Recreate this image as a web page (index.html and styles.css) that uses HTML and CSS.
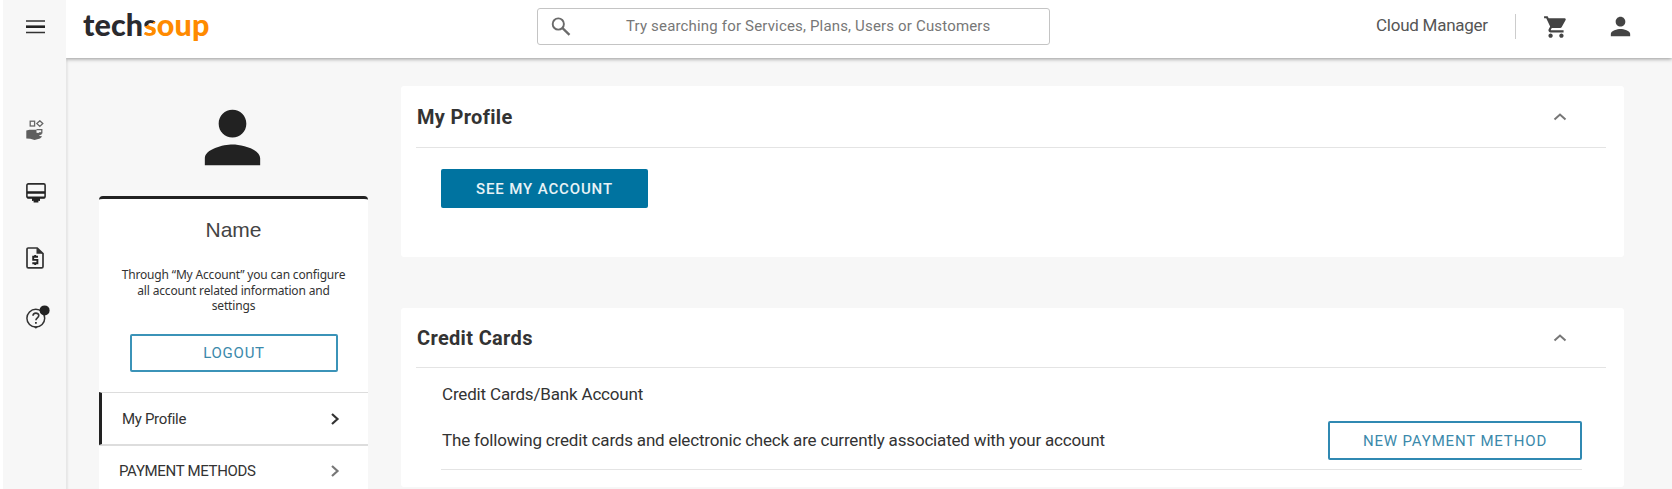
FILE: index.html
```html
<!DOCTYPE html>
<html lang="en">
<head>
  <meta charset="UTF-8" />
  <meta name="viewport" content="width=device-width, initial-scale=1.0"/>
  <title>TechSoup - My Account</title>
  <link rel="stylesheet" href="styles.css">
</head>
<body>
  <nav class="rail">
    <a class="rail-menu" href="#">
      <svg width="19" height="14" viewBox="0 0 19 14"><path d="M0 1h19M0 12.6h19" stroke="#333" stroke-width="1.5"/><path d="M0 6.7h19" stroke="#222" stroke-width="2.6"/></svg>
    </a>
    <a class="rail-services" href="#">
      <svg width="18" height="21" viewBox="0 0 18 21">
        <g fill="none" stroke="#666" stroke-width="1.3">
          <rect x="4.2" y="1.2" width="4.4" height="4.8"/>
          <path d="M13.8.8l3 2.8-3 2.8-3-2.8zM10.5 9.6h5.3v3.2h-3"/>
        </g>
        <path d="M.3 10.5l3.2-.8h7v3l2.3.3 3-.6v1.8l-3 1.6 3.400.6-2.200 2-5.500 1.700-4.200-1.300-4-.4z" fill="#5e5e5e"/>
      </svg>
    </a>
    <a class="rail-screen" href="#">
      <svg width="20" height="20" viewBox="0 0 20 20">
        <rect x=".9" y=".9" width="18.2" height="14" rx="1.4" fill="#f7f7f7" stroke="#2b2b2b" stroke-width="1.6"/>
        <path d="M1 8.2h18v2.6H1zM1 13.400h18v1.800H1zM6 15h8v3l-1.6-.2v1.7H7.6v-1.7L6 18z" fill="#222"/>
      </svg>
    </a>
    <a class="rail-invoice" href="#">
      <svg width="18" height="22" viewBox="0 0 18 22">
        <path d="M2.2 1h9l5.8 5.6v12.8c0 .8-.5 1.4-1.4 1.4H2.4c-.9 0-1.4-.6-1.4-1.4V2.3C1 1.5 1.5 1 2.2 1z" fill="none" stroke="#333" stroke-width="1.7"/>
        <path d="M10.5 1v5.8H17z" fill="#333"/>
        <path d="M12 9.7H7.2v3.2h4.2v3.4H6.3M9.2 8v1.8M9.2 16.2V18" fill="none" stroke="#222" stroke-width="1.9"/>
      </svg>
    </a>
    <a class="rail-help" href="#">
      <svg width="24" height="24" viewBox="0 0 24 24">
        <circle cx="9.8" cy="13.2" r="8.9" fill="none" stroke="#333" stroke-width="1.5"/>
        <path d="M7 10.8c0-3.7 5.8-3.5 5.8-.2 0 2.2-2.9 2.4-2.9 4.7" fill="none" stroke="#333" stroke-width="1.6"/>
        <path d="M9 17h1.8v1.8H9zM7.5 21.5l2.4 2.3 2.4-2.3z" fill="#333"/>
        <circle cx="18.6" cy="5.4" r="5" fill="#222"/>
      </svg>
    </a>
  </nav>

  <div class="page">
    <header class="topbar">
      <div class="logo">tech<span class="logo-s">s</span><span class="logo-soup">oup</span></div>
      <div class="search">
        <svg width="20" height="19" viewBox="0 0 20 19" fill="none" stroke="#6a6a6a"><circle cx="7.3" cy="7" r="5.6" stroke-width="1.9"/><path d="M11.5 11.2l7 6.6" stroke-width="2.3"/></svg>
        <span class="search-text">Try searching for Services, Plans, Users or Customers</span>
      </div>
      <div class="user-tools">
        <span class="role">Cloud Manager</span>
        <svg class="cart" width="26" height="26" viewBox="0 0 24 24" fill="#444"><path d="M7 18c-1.100 0-1.990.9-1.990 2S5.900 22 7 22s2-.9 2-2-.9-2-2-2zM1 2v2h2l3.600 7.590-1.350 2.450c-.16.280-.25.610-.25.960 0 1.100.9 2 2 2h12v-2H7.420c-.14 0-.25-.11-.25-.25l.03-.12.9-1.630h7.450c.75 0 1.410-.41 1.750-1.030l3.580-6.490A1 1 0 0 0 20 4H5.210l-.94-2H1zm16 16c-1.100 0-1.990.9-1.990 2s.89 2 1.990 2 2-.9 2-2-.9-2-2-2z"/></svg>
        <svg class="user" width="29" height="29" viewBox="0 0 24 24" fill="#444"><path d="M12 12c2.210 0 4-1.790 4-4s-1.790-4-4-4-4 1.790-4 4 1.790 4 4 4zm0 2c-2.670 0-8 1.340-8 4v2h16v-2c0-2.660-5.330-4-8-4z"/></svg>
      </div>
    </header>

    <div class="content">
      <aside class="account">
        <svg class="avatar" width="83" height="83" viewBox="0 0 24 24" fill="#222"><path d="M12 12c2.210 0 4-1.790 4-4s-1.790-4-4-4-4 1.790-4 4 1.790 4 4 4zm0 2c-2.670 0-8 1.340-8 4v2h16v-2c0-2.660-5.330-4-8-4z"/></svg>
        <div class="account-card">
          <div class="account-name">Name</div>
          <p class="account-text">Through “My Account” you can configure<br>all account related information and<br>settings</p>
          <button class="btn btn-logout">LOGOUT</button>
          <a class="account-link active" href="#"><span>My Profile</span>
            <svg width="10" height="14" viewBox="0 0 10 14"><path d="M2 2l5.500 5L2 12" fill="none" stroke="#333" stroke-width="2.200"/></svg>
          </a>
          <a class="account-link payment" href="#"><span>PAYMENT METHODS</span>
            <svg width="10" height="14" viewBox="0 0 10 14"><path d="M2 2l5.500 5L2 12" fill="none" stroke="#777" stroke-width="2.200"/></svg>
          </a>
        </div>
      </aside>

      <main class="panels">
        <section class="panel">
          <div class="panel-head">
            <h2>My Profile</h2>
            <svg width="14" height="9" viewBox="0 0 14 9"><path d="M1.500 7.500L7 2.500l5.500 5" fill="none" stroke="#777" stroke-width="2"/></svg>
          </div>
          <div class="panel-body profile-body">
            <button class="btn btn-primary">SEE MY ACCOUNT</button>
          </div>
        </section>

        <section class="panel panel-cards">
          <div class="panel-head">
            <h2>Credit Cards</h2>
            <svg width="14" height="9" viewBox="0 0 14 9"><path d="M1.500 7.500L7 2.500l5.500 5" fill="none" stroke="#777" stroke-width="2"/></svg>
          </div>
          <div class="panel-body">
            <div class="cards-label">Credit Cards/Bank Account</div>
            <div class="cards-row">
              <span class="cards-text">The following credit cards and electronic check are currently associated with your account</span>
              <button class="btn btn-payment">NEW PAYMENT METHOD</button>
            </div>
          </div>
        </section>
      </main>
    </div>
  </div>
</body>
</html>
```
FILE: styles.css
```css
* {
  box-sizing: border-box;
}

body {
  margin: 0;
  height: 489px;
  display: flex;
  background-color: #fff;
  font-family: Roboto, sans-serif;
  color: #333;
}

a {
  color: inherit;
  text-decoration: none;
}

svg {
  display: block;
  flex-shrink: 0;
}

.rail {
  width: 63px;
  margin-left: 3px;
  padding: 20px 0 0 22.5px;
  background-color: #f7f7f7;
}

.rail-services {
  display: block;
  margin-top: 86px;
}

.rail-screen {
  display: block;
  margin-top: 42px;
}

.rail-invoice {
  display: block;
  margin-top: 44px;
}

.rail-help {
  display: block;
  margin-top: 36px;
}

.page {
  flex: 1;
  min-width: 0;
}

.topbar {
  position: relative;
  height: 58px;
  padding: 8px 37px 0 17px;
  display: flex;
  align-items: flex-start;
  background-color: #fff;
  box-shadow: 0 1px 4px rgba(0, 0, 0, 0.4);
  clip-path: inset(0 0 -8px 0);
}

.logo {
  width: 454px;
  font-family: Lato, sans-serif;
  font-size: 30.5px;
  font-weight: 900;
  line-height: 32px;
  letter-spacing: 0.1px;
  color: #2a2a2e;
}

.logo-s {
  color: transparent;
  background: linear-gradient(155deg, #2a2a2e 50%, #ff8a00 50%);
  -webkit-background-clip: text;
  background-clip: text;
}

.logo-soup {
  color: #ff8a00;
}

.search {
  width: 513px;
  height: 37px;
  padding: 8px 13px 0;
  display: flex;
  border: 1px solid #c4c4c4;
  border-radius: 3px;
}

.search-text {
  margin-left: 55px;
  font-size: 15px;
  line-height: 19px;
  letter-spacing: 0.17px;
  color: #777;
  white-space: nowrap;
}

.user-tools {
  margin-left: auto;
  display: flex;
  align-items: flex-start;
}

.role {
  width: 140px;
  height: 25px;
  margin-top: 6px;
  font-size: 17px;
  line-height: 22px;
  letter-spacing: -0.25px;
  color: #555;
  border-right: 1px solid #ccc;
  white-space: nowrap;
}

.cart {
  margin: 6px 0 0 27px;
}

.user {
  margin: 4px 0 0 37px;
}

.content {
  height: 431px;
  display: flex;
  align-items: flex-start;
  padding: 28px 48px 0 33px;
  background-color: #f7f7f7;
  box-shadow: inset 3px 0 2px -1px #e6e6e6;
}

.account {
  width: 269px;
  margin: 10px 33px 0 0;
}

.avatar {
  margin: 0 auto 0 92px;
}

.account-card {
  margin-top: 17px;
  height: 293px;
  background-color: #fff;
  border-top: 3px solid #222;
  border-radius: 4px 4px 0 0;
}

.account-name {
  padding-top: 19px;
  font-family: "Liberation Sans", sans-serif;
  font-size: 21px;
  line-height: 24px;
  text-align: center;
  color: #444;
}

.account-text {
  margin: 25px 0 0;
  font-family: "Noto Sans", sans-serif;
  font-size: 12px;
  line-height: 15.7px;
  letter-spacing: -0.17px;
  text-align: center;
  color: #333;
}

.btn {
  display: block;
  padding: 0;
  font-family: Roboto, sans-serif;
  font-size: 15px;
  border-radius: 2px;
  white-space: nowrap;
}

.btn-logout {
  width: 208px;
  height: 38px;
  margin: 20px 0 20px 31px;
  background-color: #fff;
  border: 2px solid #3b93b8;
  color: #3b89ab;
  letter-spacing: 0.75px;
}

.account-link {
  height: 53px;
  padding: 0 28px 0 20px;
  display: flex;
  align-items: center;
  justify-content: space-between;
  border-top: 1px solid #ddd;
  font-size: 15px;
  letter-spacing: -0.33px;
}

.account-link.active {
  border-left: 3px solid #222;
  border-bottom: 1px solid #ddd;
}

.account-link.payment {
  height: 43px;
  padding-top: 8px;
}

.panels {
  flex: 1;
}

.panel {
  height: 171px;
  padding: 0 18px 0 15px;
  background-color: #fff;
  border-radius: 3px;
}

.panel-cards {
  height: 179px;
  margin-top: 51px;
}

.panel-head {
  height: 62px;
  padding: 0 39px 0 1px;
  display: flex;
  align-items: center;
  justify-content: space-between;
  border-bottom: 1px solid #e4e4e4;
}

.panel-cards .panel-head {
  height: 60px;
}

.panel-head h2 {
  margin: 0;
  font-size: 20px;
  font-weight: 700;
  letter-spacing: 0.33px;
}

.panel-body {
  padding: 0 24px 0 25px;
}

.profile-body {
  padding-top: 21px;
}

.btn-primary {
  width: 207px;
  height: 39px;
  background-color: #0073a0;
  border: 0;
  color: #e8f2f6;
  font-weight: 500;
  letter-spacing: 0.87px;
}

.cards-label {
  padding: 16px 0 0 1px;
  font-size: 17px;
  line-height: 20px;
  letter-spacing: -0.17px;
}

.cards-row {
  height: 66px;
  padding-top: 17px;
  display: flex;
  justify-content: space-between;
  border-bottom: 1px solid #e4e4e4;
}

.cards-text {
  padding: 9px 0 0 1px;
  font-size: 17px;
  line-height: 20px;
  letter-spacing: -0.18px;
  white-space: nowrap;
}

.btn-payment {
  width: 254px;
  height: 39px;
  background-color: #fff;
  border: 2px solid #3089b2;
  color: #3b89ab;
  letter-spacing: 0.85px;
}
```
